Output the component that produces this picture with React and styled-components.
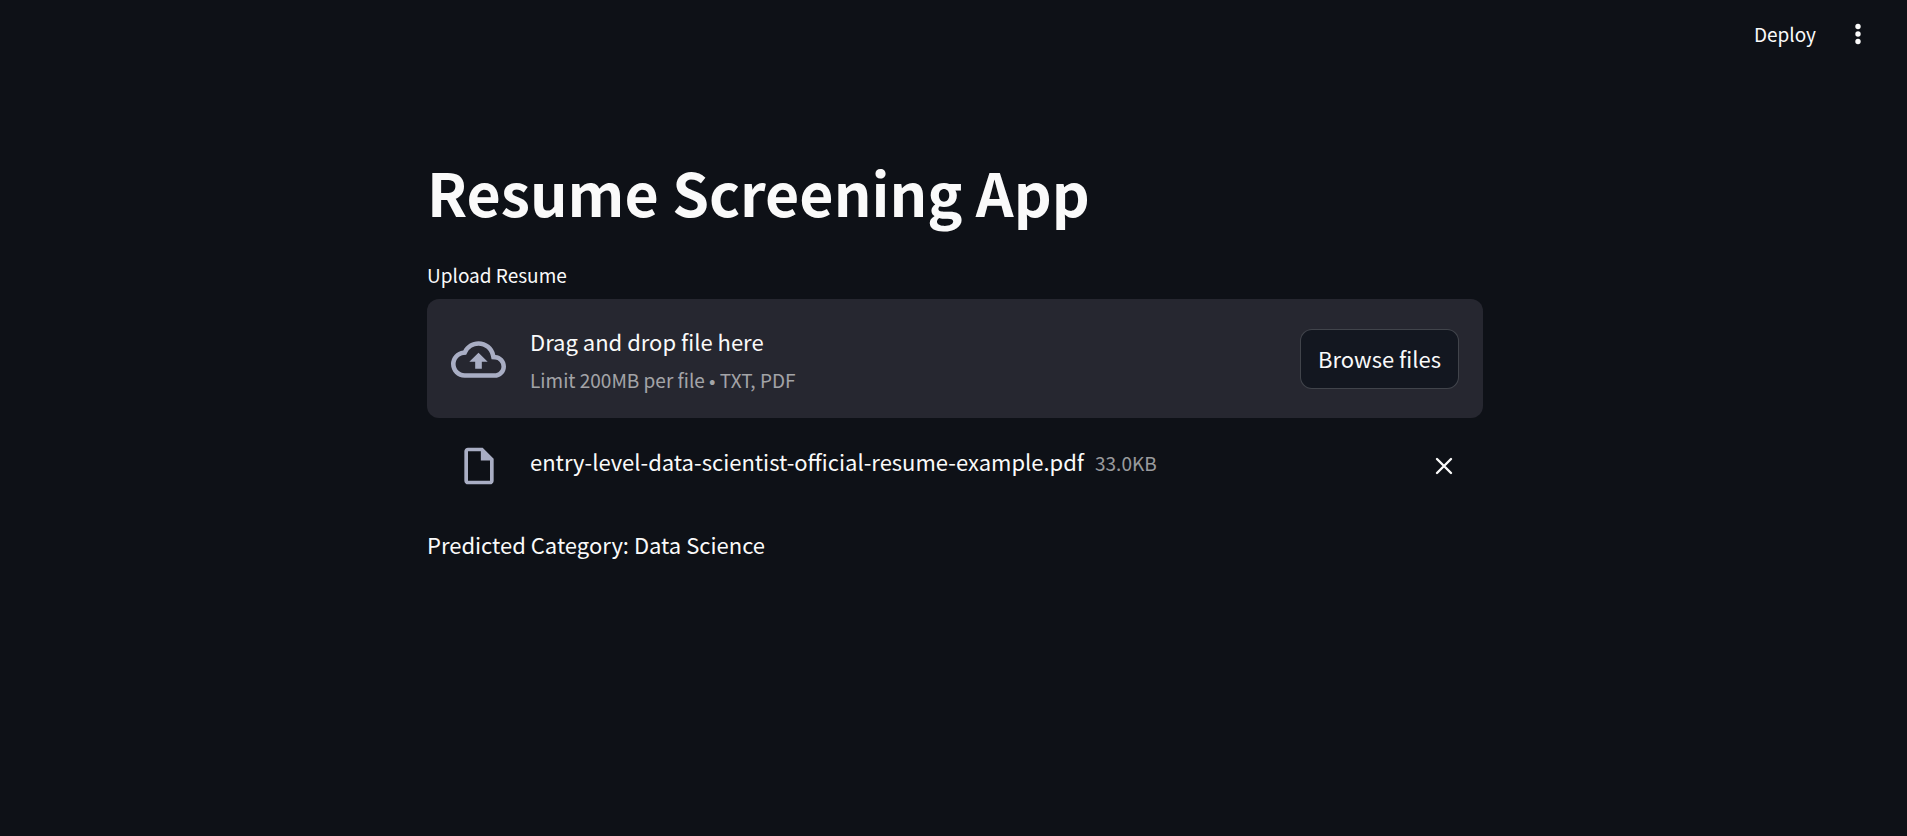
import React from "react";
import styled, { createGlobalStyle } from "styled-components";

const GlobalStyle = createGlobalStyle`
  *, *::before, *::after { box-sizing: border-box; }
  body {
    margin: 0;
    background: #0e1117;
    color: #fafafa;
    font-family: "Noto Sans CJK JP", "Noto Sans", sans-serif;
    font-size: 22px;
    line-height: 36px;
  }
  button { font: inherit; color: inherit; cursor: pointer; }
`;

const Header = styled.header`
  display: flex;
  align-items: center;
  justify-content: flex-end;
  gap: 27px;
  height: 68px;
  padding: 0 34px;
`;

const PlainButton = styled.button`
  border: 0;
  padding: 0;
  background: none;
  font-size: 19px;
  line-height: 30px;
`;

const IconButton = styled(PlainButton)`
  display: flex;
  align-items: center;
  justify-content: center;
  flex: none;
  width: 30px;
  height: 46px;
`;

const Main = styled.main`
  max-width: 1059px;
  margin: 0 auto;
  padding: 84px 0 48px 3px;
`;

const Title = styled.h1`
  margin: 0 0 28px;
  font-size: 59px;
  font-weight: 700;
  line-height: 80px;
`;

const FieldLabel = styled.label`
  display: block;
  margin-bottom: 9px;
  font-size: 19px;
  line-height: 30px;
`;

const Dropzone = styled.section`
  display: flex;
  align-items: center;
  gap: 24px;
  padding: 24px 24px 23px;
  border-radius: 12px;
  background: #262730;
`;

const IconSlot = styled.span`
  display: flex;
  align-items: center;
  justify-content: center;
  flex: none;
  width: 55px;
  height: 46px;
  color: #a9aec4;
`;

const Instructions = styled.div`
  display: flex;
  flex-direction: column;
  flex: 1;
  gap: 6px;
`;

const Muted = styled.span`
  color: rgba(250, 250, 250, 0.6);
  font-size: 19px;
  line-height: 30px;
`;

const HiddenInput = styled.input`
  display: none;
`;

const BrowseButton = styled.button`
  height: 60px;
  padding: 0 17px 2px;
  border: 1px solid rgba(250, 250, 250, 0.2);
  border-radius: 12px;
  background: #131720;
`;

const FileRow = styled.div`
  display: flex;
  align-items: flex-start;
  gap: 24px;
  margin-top: 25px;
  padding: 0 24px;
`;

const FileInfo = styled.div`
  display: flex;
  align-items: baseline;
  flex: 1;
  gap: 11px;
  min-width: 0;
`;

const Result = styled.p`
  margin: 37px 0 0;
`;

const CloudUploadIcon = () => (
  <svg width="55" height="55" viewBox="0 0 24 24" fill="currentColor" aria-hidden="true">
    <path d="M19.35 10.04A7.49 7.49 0 0012 4C9.11 4 6.6 5.64 5.35 8.04A5.994 5.994 0 000 14c0 3.31 2.69 6 6 6h13c2.76 0 5-2.24 5-5 0-2.64-2.05-4.78-4.65-4.96zM19 18H6c-2.21 0-4-1.79-4-4 0-2.05 1.53-3.76 3.56-3.97l1.07-.11.5-.95A5.469 5.469 0 0112 6c2.62 0 4.88 1.86 5.39 4.43l.3 1.5 1.53.11A2.98 2.98 0 0122 15c0 1.65-1.35 3-3 3zM8 13h2.55v3h2.9v-3H16l-4-4z" />
  </svg>
);

const FileIcon = () => (
  <svg width="44" height="44" viewBox="0 0 24 24" fill="currentColor" aria-hidden="true">
    <path d="M14 2H6c-1.1 0-1.99.9-1.99 2L4 20c0 1.1.89 2 1.99 2H18c1.1 0 2-.9 2-2V8l-6-6zM6 20V4h7v5h5v11H6z" />
  </svg>
);

const CloseIcon = () => (
  <svg width="18" height="18" viewBox="0 0 18 18" fill="none" stroke="currentColor" strokeWidth="2.4" strokeLinecap="round" aria-hidden="true">
    <path d="M2 2l14 14M16 2L2 16" />
  </svg>
);

const DotsIcon = () => (
  <svg width="6" height="22" viewBox="0 0 6 22" fill="currentColor" aria-hidden="true">
    <circle cx="3" cy="3.5" r="2.7" />
    <circle cx="3" cy="11" r="2.7" />
    <circle cx="3" cy="18.5" r="2.7" />
  </svg>
);

export default function App() {
  const inputRef = React.useRef(null);
  return (
    <>
      <GlobalStyle />
      <Header>
        <PlainButton type="button">Deploy</PlainButton>
        <IconButton type="button" aria-label="Main menu">
          <DotsIcon />
        </IconButton>
      </Header>
      <Main>
        <Title>Resume Screening App</Title>
        <FieldLabel htmlFor="resume">Upload Resume</FieldLabel>
        <Dropzone>
          <IconSlot>
            <CloudUploadIcon />
          </IconSlot>
          <Instructions>
            <span>Drag and drop file here</span>
            <Muted>Limit 200MB per file • TXT, PDF</Muted>
          </Instructions>
          <HiddenInput ref={inputRef} id="resume" type="file" accept=".txt,.pdf" />
          <BrowseButton type="button" onClick={() => inputRef.current.click()}>
            Browse files
          </BrowseButton>
        </Dropzone>
        <FileRow>
          <IconSlot>
            <FileIcon />
          </IconSlot>
          <FileInfo>
            <span>entry-level-data-scientist-official-resume-example.pdf</span>
            <Muted>33.0KB</Muted>
          </FileInfo>
          <IconButton type="button" aria-label="Remove file">
            <CloseIcon />
          </IconButton>
        </FileRow>
        <Result>Predicted Category: Data Science</Result>
      </Main>
    </>
  );
}
